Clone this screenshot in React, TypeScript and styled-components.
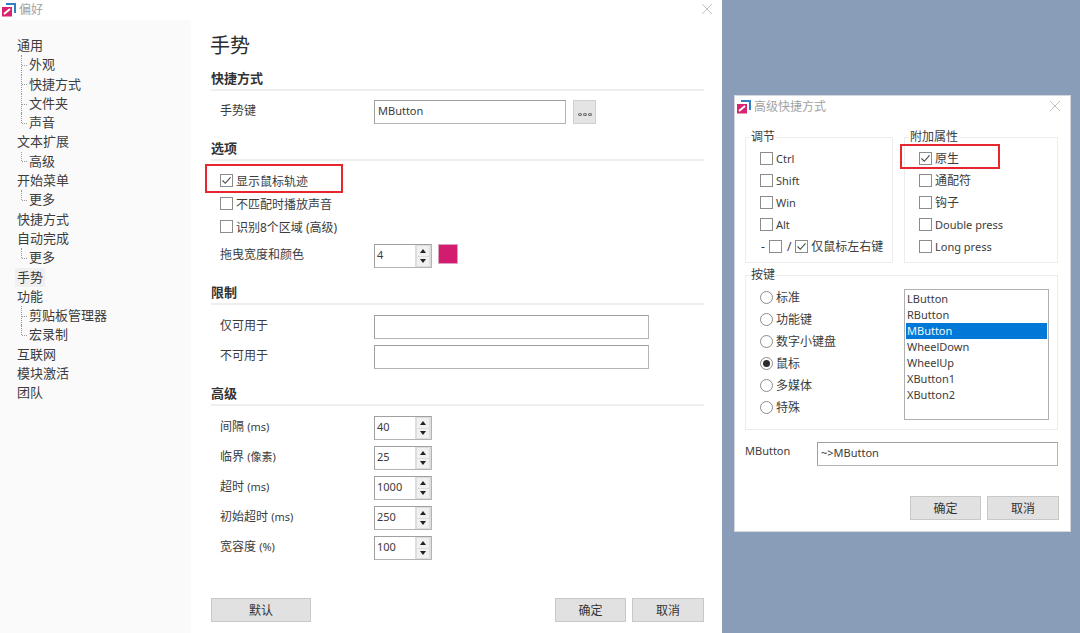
import React from 'react';
import styled, { createGlobalStyle } from 'styled-components';

const GlobalStyle = createGlobalStyle`
  html, body {
    margin: 0;
    padding: 0;
    overflow: hidden;
    background: #8a9db8;
  }
  body, input {
    font-family: "Noto Sans", "Noto Sans CJK SC", sans-serif;
    font-size: 12px;
    color: #3c3c3c;
  }
`;

const Desktop = styled.div`
  display: flex;
  align-items: flex-start;
  width: 1080px;
  height: 633px;
  overflow: hidden;
  background: #8a9db8;
`;

const MainWindow = styled.div`
  display: flex;
  flex-direction: column;
  flex: none;
  width: 722px;
  height: 633px;
  background: #fff;
`;

const TitleBar = styled.div`
  display: flex;
  align-items: center;
  flex: none;
  box-sizing: border-box;
  gap: 2px;
  height: ${p => p.$height}px;
  padding: 0 ${p => p.$right}px ${p => p.$bottom}px ${p => p.$left}px;
  color: #a2a2a2;
`;

const TitleText = styled.span`
  flex: 1;
  font-size: 12px;
`;

const Body = styled.div`
  display: flex;
  flex: 1;
  min-height: 0;
`;

const Sidebar = styled.nav`
  flex: none;
  width: 191px;
  padding-top: 16px;
  box-sizing: border-box;
  background: #fafafa;
`;

const NavItem = styled.div`
  position: relative;
  height: 19.3px;
  line-height: 19.3px;
  font-size: 13px;
  white-space: nowrap;
  padding-left: ${p => (p.$child ? 29 : 17)}px;

  ${p =>
    p.$child &&
    `
    &::before {
      content: '';
      position: absolute;
      left: 21px;
      top: 0;
      height: ${p.$last ? '50%' : '100%'};
      border-left: 1px dotted #999;
    }
    &::after {
      content: '';
      position: absolute;
      left: 22px;
      top: 50%;
      width: 5px;
      border-top: 1px dotted #999;
    }
  `}
`;

const ActiveLabel = styled.span`
  display: inline-block;
  margin-left: -2px;
  padding: 0 2px;
  background: #f0f0f0;
`;

const Content = styled.main`
  display: flex;
  flex-direction: column;
  flex: 1;
  padding: 10px 18px 11px 20px;
  min-width: 0;
`;

const PageTitle = styled.h1`
  margin: 0 0 0 -1px;
  height: 30px;
  line-height: 32px;
  font-size: 20px;
  font-weight: 400;
  color: #2c2c2c;
`;

const Section = styled.section`
  margin-top: ${p => p.$top ?? 15}px;
`;

const SectionHead = styled.h2`
  margin: 0;
  height: 20px;
  line-height: 18px;
  font-size: 13px;
  font-weight: 700;
  color: #333;
  border-bottom: 2px solid #eeeeee;
`;

const Rows = styled.div`
  display: flex;
  flex-direction: column;
  gap: ${p => p.$gap ?? 6}px;
  margin-top: ${p => p.$top ?? 10}px;
  padding-left: 9px;
`;

const FieldRow = styled.div`
  display: flex;
  align-items: center;
  height: 24px;
`;

const FieldLabel = styled.span`
  flex: none;
  width: 154px;
  padding-bottom: 4px;
`;

const TextField = styled.input`
  box-sizing: border-box;
  flex: none;
  width: ${p => p.$width}px;
  height: 24px;
  padding: 0 3px 4px;
  border: 1px solid #b4b4b4;
  border-top-color: #a0a0a0;
  border-left-color: #a0a0a0;
  background: #fff;
  font-size: 11px;
  outline: none;
`;

const BrowseButton = styled.button`
  display: flex;
  align-items: flex-end;
  justify-content: center;
  gap: 1px;
  box-sizing: border-box;
  flex: none;
  width: 23px;
  height: 24px;
  margin-left: 7px;
  padding: 0 0 7px;
  border: 1px solid #cfcfcf;
  background: #e4e4e4;
`;

const BrowseDot = styled.i`
  width: 4px;
  height: 3px;
  border: 1px solid #666;
  border-radius: 50%;
  box-sizing: border-box;
`;

const CheckRows = styled.div`
  display: flex;
  flex-direction: column;
  margin-top: 8px;
  padding-left: 9px;
`;

const CheckRow = styled.label`
  position: relative;
  display: flex;
  align-items: center;
  gap: 3px;
  height: ${p => p.$height ?? 23}px;
  white-space: nowrap;
`;

const Box = styled.span`
  display: flex;
  align-items: center;
  justify-content: center;
  flex: none;
  box-sizing: border-box;
  width: 13px;
  height: 13px;
  border: 1px solid #8c8c8c;
  background: #fff;
`;

const Highlight = styled.span`
  position: absolute;
  left: ${p => p.$left}px;
  top: ${p => p.$top}px;
  width: ${p => p.$width}px;
  height: ${p => p.$height}px;
  box-sizing: border-box;
  border: 2px solid #e8262d;
  pointer-events: none;
`;

const SpinBox = styled.div`
  display: flex;
  flex: none;
  box-sizing: border-box;
  width: 58px;
  height: 24px;
  border: 1px solid #b4b4b4;
  border-top-color: #a0a0a0;
  border-left-color: #a0a0a0;
  background: #dedede;
`;

const SpinValue = styled.span`
  flex: 1;
  padding-left: 2px;
  font-size: 11px;
  line-height: 20px;
  background: #fff;
`;

const SpinButtons = styled.div`
  display: flex;
  flex-direction: column;
  justify-content: center;
  gap: 1px;
  flex: none;
  width: 16px;
  padding: 0 2px;
  box-sizing: border-box;
`;

const SpinButton = styled.span`
  display: flex;
  align-items: center;
  justify-content: center;
  height: 9.5px;
  background: #f1f1f1;

  &::before {
    content: '';
    border-left: 3.5px solid transparent;
    border-right: 3.5px solid transparent;
    ${p => (p.$down ? 'border-top: 4px solid #222;' : 'border-bottom: 4px solid #222;')}
  }
`;

const ColorSwatch = styled.span`
  flex: none;
  box-sizing: border-box;
  width: 20px;
  height: 20px;
  margin: -4px 0 0 6px;
  border: 1px solid #d9a3bd;
  background: #d21c6f;
`;

const Footer = styled.footer`
  display: flex;
  align-items: center;
  margin-top: auto;
`;

const FooterRight = styled.div`
  display: flex;
  gap: ${p => p.$gap}px;
  margin-left: auto;
`;

const PushButton = styled.button`
  box-sizing: border-box;
  width: ${p => p.$width}px;
  height: 24px;
  padding: 0;
  border: 1px solid #c8c8c8;
  background: #e1e1e1;
  font-family: inherit;
  font-size: 12px;
  color: #333;
`;

const DialogWindow = styled.div`
  flex: none;
  box-sizing: border-box;
  width: 337px;
  height: 437px;
  margin: 95px 0 0 12px;
  border: 1px solid #d4d8de;
  background: #fff;
`;

const DialogBody = styled.div`
  display: flex;
  flex-direction: column;
  padding: 10px 12px 0 10px;
`;

const GroupRow = styled.div`
  display: flex;
  gap: 11px;
`;

const Group = styled.fieldset`
  box-sizing: border-box;
  flex: none;
  width: ${p => p.$width}px;
  min-width: 0;
  margin: ${p => p.$top ?? 0}px 0 0;
  padding: ${p => p.$inset ?? 1}px 0 ${p => p.$bottom}px 14px;
  border: 1px solid #ececec;
`;

const GroupLegend = styled.legend`
  margin-left: -10px;
  padding: 0 1px;
  height: 18px;
  line-height: 18px;
  font-size: 12px;
`;

const Small = styled.span`
  font-size: 11px;
`;

const Separator = styled.span`
  flex: none;
  margin: ${p => p.$margin};
`;

const KeyColumns = styled.div`
  display: flex;
  justify-content: space-between;
  padding-right: 8px;
`;

const RadioColumn = styled.div`
  display: flex;
  flex-direction: column;
`;

const RadioRow = styled.label`
  display: flex;
  align-items: center;
  gap: 3px;
  height: 22px;
`;

const Radio = styled.span`
  display: flex;
  align-items: center;
  justify-content: center;
  flex: none;
  box-sizing: border-box;
  width: 13px;
  height: 13px;
  border: 1px solid #8c8c8c;
  border-radius: 50%;

  &::after {
    content: '';
    display: ${p => (p.$on ? 'block' : 'none')};
    width: 7px;
    height: 7px;
    border-radius: 50%;
    background: #2c2c2c;
  }
`;

const KeyList = styled.ul`
  box-sizing: border-box;
  flex: none;
  width: 145px;
  height: 131px;
  margin: 3px 0 0;
  padding: 1px;
  list-style: none;
  border: 1px solid #b0b0b0;
  background: #fff;
`;

const KeyItem = styled.li`
  height: 16px;
  line-height: 16px;
  padding-left: 1px;
  font-size: 11px;
  background: ${p => (p.$selected ? '#0078d7' : 'transparent')};
  color: ${p => (p.$selected ? '#f2f8fd' : '#3c3c3c')};
`;

const KeyRow = styled.div`
  display: flex;
  align-items: flex-start;
  margin-top: 12px;
`;

const KeyLabel = styled.span`
  flex: none;
  width: 72px;
  font-size: 11px;
  line-height: 18px;
`;

const DialogFooter = styled.div`
  display: flex;
  justify-content: flex-end;
  margin: 30px -1px 0 0;
`;

const Logo: React.FC = () => (
  <svg width="16" height="16" viewBox="0 0 16 16">
    <path d="M5 2h10v10h-2V4H5z" fill="#2f7fc1" />
    <path d="M1 6h10v9.500H1z" fill="#d6246e" />
    <path d="M3 13l6-5" stroke="#fff" strokeWidth="2" fill="none" />
  </svg>
);

const CloseIcon: React.FC = () => (
  <svg width="12" height="12" viewBox="0 0 12 12">
    <path d="M1 1l10 10M11 1L1 11" stroke="#c2c2c2" strokeWidth="1" fill="none" />
  </svg>
);

const CheckMark: React.FC = () => (
  <svg width="11" height="11" viewBox="0 0 11 11">
    <path d="M1.500 5.500l2.800 2.800 5.200-6" stroke="#444" strokeWidth="1.100" fill="none" />
  </svg>
);

const CheckBox: React.FC<{ checked?: boolean }> = ({ checked }) => (
  <Box>{checked && <CheckMark />}</Box>
);

const Spinner: React.FC<{ value: string }> = ({ value }) => (
  <SpinBox>
    <SpinValue>{value}</SpinValue>
    <SpinButtons>
      <SpinButton />
      <SpinButton $down />
    </SpinButtons>
  </SpinBox>
);

const navItems = [
  { label: '通用' },
  { label: '外观', child: true },
  { label: '快捷方式', child: true },
  { label: '文件夹', child: true },
  { label: '声音', child: true, last: true },
  { label: '文本扩展' },
  { label: '高级', child: true, last: true },
  { label: '开始菜单' },
  { label: '更多', child: true, last: true },
  { label: '快捷方式' },
  { label: '自动完成' },
  { label: '更多', child: true, last: true },
  { label: '手势', active: true },
  { label: '功能' },
  { label: '剪贴板管理器', child: true },
  { label: '宏录制', child: true, last: true },
  { label: '互联网' },
  { label: '模块激活' },
  { label: '团队' },
];

const advancedRows = [
  { label: '间隔', unit: '(ms)', value: '40' },
  { label: '临界', unit: '(像素)', value: '25' },
  { label: '超时', unit: '(ms)', value: '1000' },
  { label: '初始超时', unit: '(ms)', value: '250' },
  { label: '宽容度', unit: '(%)', value: '100' },
];

const keyTypes = ['标准', '功能键', '数字小键盘', '鼠标', '多媒体', '特殊'];
const keyNames = ['LButton', 'RButton', 'MButton', 'WheelDown', 'WheelUp', 'XButton1', 'XButton2'];

const App: React.FC = () => {
  return (
    <Desktop>
      <GlobalStyle />
      <MainWindow>
        <TitleBar $height={20} $left={1} $right={9} $bottom={3}>
          <Logo />
          <TitleText>偏好</TitleText>
          <CloseIcon />
        </TitleBar>
        <Body>
          <Sidebar>
            {navItems.map((item, i) => (
              <NavItem key={i} $child={item.child} $last={item.last}>
                {item.active ? <ActiveLabel>{item.label}</ActiveLabel> : item.label}
              </NavItem>
            ))}
          </Sidebar>
          <Content>
            <PageTitle>手势</PageTitle>
            <Section $top={9}>
              <SectionHead>快捷方式</SectionHead>
              <Rows $top={9}>
                <FieldRow>
                  <FieldLabel>手势键</FieldLabel>
                  <TextField $width={192} readOnly value="MButton" />
                  <BrowseButton>
                    <BrowseDot />
                    <BrowseDot />
                    <BrowseDot />
                  </BrowseButton>
                </FieldRow>
              </Rows>
            </Section>
            <Section>
              <SectionHead>选项</SectionHead>
              <CheckRows>
                <CheckRow>
                  <CheckBox checked />
                  显示鼠标轨迹
                  <Highlight $left={-15} $top={-5} $width={138} $height={29} />
                </CheckRow>
                <CheckRow>
                  <CheckBox />
                  不匹配时播放声音
                </CheckRow>
                <CheckRow>
                  <CheckBox />
                  识别8个区域 (高级)
                </CheckRow>
              </CheckRows>
              <Rows $top={6}>
                <FieldRow>
                  <FieldLabel>拖曳宽度和颜色</FieldLabel>
                  <Spinner value="4" />
                  <ColorSwatch />
                </FieldRow>
              </Rows>
            </Section>
            <Section>
              <SectionHead>限制</SectionHead>
              <Rows>
                <FieldRow>
                  <FieldLabel>仅可用于</FieldLabel>
                  <TextField $width={275} readOnly value="" />
                </FieldRow>
                <FieldRow>
                  <FieldLabel>不可用于</FieldLabel>
                  <TextField $width={275} readOnly value="" />
                </FieldRow>
              </Rows>
            </Section>
            <Section>
              <SectionHead>高级</SectionHead>
              <Rows>
                {advancedRows.map(row => (
                  <FieldRow key={row.label}>
                    <FieldLabel>
                      {row.label} <Small>{row.unit}</Small>
                    </FieldLabel>
                    <Spinner value={row.value} />
                  </FieldRow>
                ))}
              </Rows>
            </Section>
            <Footer>
              <PushButton $width={100}>默认</PushButton>
              <FooterRight $gap={6}>
                <PushButton $width={71}>确定</PushButton>
                <PushButton $width={72}>取消</PushButton>
              </FooterRight>
            </Footer>
          </Content>
        </Body>
      </MainWindow>

      <DialogWindow>
        <TitleBar $height={22} $left={1} $right={9} $bottom={2}>
          <Logo />
          <TitleText>高级快捷方式</TitleText>
          <CloseIcon />
        </TitleBar>
        <DialogBody>
          <GroupRow>
            <Group $width={148} $bottom={5}>
              <GroupLegend>调节</GroupLegend>
              <CheckRow $height={22}>
                <CheckBox />
                <Small>Ctrl</Small>
              </CheckRow>
              <CheckRow $height={22}>
                <CheckBox />
                <Small>Shift</Small>
              </CheckRow>
              <CheckRow $height={22}>
                <CheckBox />
                <Small>Win</Small>
              </CheckRow>
              <CheckRow $height={22}>
                <CheckBox />
                <Small>Alt</Small>
              </CheckRow>
              <CheckRow $height={22}>
                <Separator $margin="0 1px 0 1px">-</Separator>
                <CheckBox />
                <Separator $margin="0 1px 0 2px">/</Separator>
                <CheckBox checked />
                仅鼠标左右键
              </CheckRow>
            </Group>
            <Group $width={154} $bottom={5}>
              <GroupLegend>附加属性</GroupLegend>
              <CheckRow $height={22}>
                <CheckBox checked />
                原生
                <Highlight $left={-19} $top={-3} $width={100} $height={25} />
              </CheckRow>
              <CheckRow $height={22}>
                <CheckBox />
                通配符
              </CheckRow>
              <CheckRow $height={22}>
                <CheckBox />
                钩子
              </CheckRow>
              <CheckRow $height={22}>
                <CheckBox />
                <Small>Double press</Small>
              </CheckRow>
              <CheckRow $height={22}>
                <CheckBox />
                <Small>Long press</Small>
              </CheckRow>
            </Group>
          </GroupRow>
          <Group $width={313} $top={3} $inset={2} $bottom={9}>
            <GroupLegend>按键</GroupLegend>
            <KeyColumns>
              <RadioColumn>
                {keyTypes.map(type => (
                  <RadioRow key={type}>
                    <Radio $on={type === '鼠标'} />
                    {type}
                  </RadioRow>
                ))}
              </RadioColumn>
              <KeyList>
                {keyNames.map(name => (
                  <KeyItem key={name} $selected={name === 'MButton'}>
                    {name}
                  </KeyItem>
                ))}
              </KeyList>
            </KeyColumns>
          </Group>
          <KeyRow>
            <KeyLabel>MButton</KeyLabel>
            <TextField $width={241} readOnly value="~>MButton" />
          </KeyRow>
          <DialogFooter>
            <FooterRight $gap={6}>
              <PushButton $width={71}>确定</PushButton>
              <PushButton $width={72}>取消</PushButton>
            </FooterRight>
          </DialogFooter>
        </DialogBody>
      </DialogWindow>
    </Desktop>
  );
};

export default App;
